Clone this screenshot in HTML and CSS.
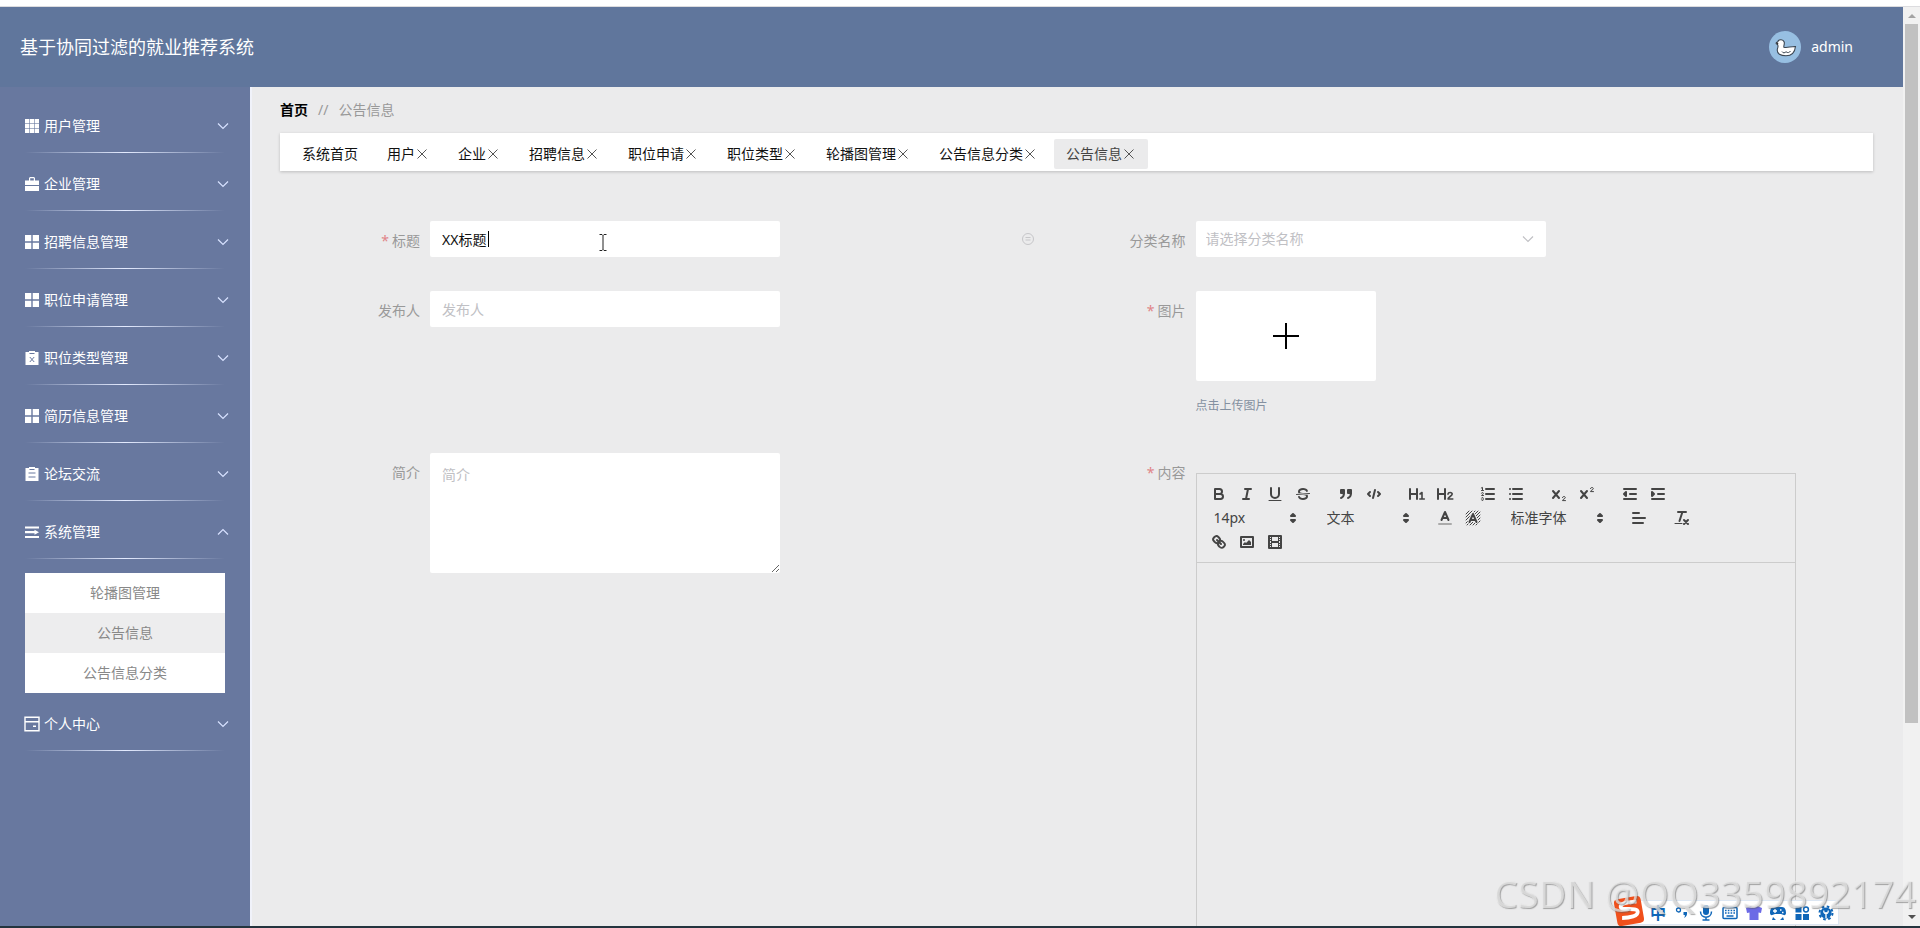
FILE: index.html
```html
<!DOCTYPE html>
<html lang="zh-CN">
<head>
<meta charset="utf-8">
<title>基于协同过滤的就业推荐系统</title>
<link rel="stylesheet" href="styles.css">
</head>
<body>
<svg class="defs" aria-hidden="true">
  <symbol id="down" viewBox="0 0 12 12"><path d="M1 3.500l5 5 5-5" fill="none" stroke="currentColor" stroke-width="1.200"/></symbol>
  <symbol id="up" viewBox="0 0 12 12"><path d="M1 8.500l5-5 5 5" fill="none" stroke="currentColor" stroke-width="1.200"/></symbol>
  <symbol id="close" viewBox="0 0 14 14"><path d="M2.500 2.500l9 9M11.500 2.500l-9 9" fill="none" stroke="currentColor"/></symbol>
  <symbol id="grid4" viewBox="0 0 14 14"><path d="M0 0h6.300v6.300H0zM7.700 0H14v6.300H7.700zM0 7.700h6.300V14H0zM7.700 7.700H14V14H7.700z" fill="currentColor"/></symbol>
  <symbol id="sorter" viewBox="0 0 18 18"><path d="M7 11l2 2 2-2zM7 7l2-2 2 2z" fill="#444" stroke="#444" stroke-width="2" stroke-linejoin="round"/></symbol>
</svg>

<div class="window-edge"></div>
<div class="viewport">
  <div class="app">
    <header class="header">
      <h1 class="brand">基于协同过滤的就业推荐系统</h1>
      <button class="user" type="button">
        <svg class="avatar" viewBox="0 0 32 32"><circle cx="16" cy="16" r="16" fill="#97bfe2"/><path d="M8.500 13.500c-2-.5-1.800-2 0-2.400C9.300 8.500 14 7.600 15.200 11c.6 2-.7 3.400-.3 5.200 3.200 1 6.800-.9 11.600-.7-.6 5.500-3.500 9.300-9.500 9.300-5.500 0-9.200-2-8.700-6.300.3-2 1.500-3 .2-5z" fill="#fff" stroke="#3b4652" stroke-width="1.100"/><path d="M13 20.500c1 2 3 1.500 4 .2 1.500 1.500 3.500 1 4.500-.7" fill="none" stroke="#3b4652"/><path d="M7 11.800l2.400.3-.6 2z" fill="#333"/></svg>
        <span>admin</span>
      </button>
    </header>

    <div class="body">
      <nav class="sidebar">
        <button class="menu" type="button"><svg class="ico" viewBox="0 0 14 14"><path d="M0 0h14v14H0z" fill="currentColor"/><path d="M4.500 0v14M9.500 0v14M0 4.500h14M0 9.500h14" stroke="#68789f" stroke-width=".6"/></svg><span>用户管理</span><svg class="arrow"><use href="#down"/></svg></button>
        <button class="menu" type="button"><svg class="ico" viewBox="0 0 14 14"><path d="M0 3.500h4V1l1-1h4l1 1v2.500h4V8H0zM5.200 3.500h3.600V1.300H5.200zM0 9h14v5H0z" fill="currentColor" fill-rule="evenodd"/></svg><span>企业管理</span><svg class="arrow"><use href="#down"/></svg></button>
        <button class="menu" type="button"><svg class="ico"><use href="#grid4"/></svg><span>招聘信息管理</span><svg class="arrow"><use href="#down"/></svg></button>
        <button class="menu" type="button"><svg class="ico"><use href="#grid4"/></svg><span>职位申请管理</span><svg class="arrow"><use href="#down"/></svg></button>
        <button class="menu" type="button"><svg class="ico" viewBox="0 0 14 14"><path d="M.5 1H4V0h6v1h3.500v13H.5z" fill="currentColor"/><path d="M4.500 2.500h5M4.800 6l4.400 5M9.200 6l-4.400 5" stroke="#68789f" fill="none"/></svg><span>职位类型管理</span><svg class="arrow"><use href="#down"/></svg></button>
        <button class="menu" type="button"><svg class="ico"><use href="#grid4"/></svg><span>简历信息管理</span><svg class="arrow"><use href="#down"/></svg></button>
        <button class="menu" type="button"><svg class="ico" viewBox="0 0 14 14"><path d="M.5 1H4V0h6v1h3.500v13H.5z" fill="currentColor"/><path d="M4.500 2.500h5M3.500 6h7M3.500 10h7" stroke="#68789f" fill="none"/></svg><span>论坛交流</span><svg class="arrow"><use href="#down"/></svg></button>
        <button class="menu" type="button" aria-expanded="true"><svg class="ico" viewBox="0 0 14 14"><path d="M0 2.500h14M0 7.200h10M0 12h14" stroke="currentColor" stroke-width="2.200"/><path d="M9.500 4.700l4.500 2.500-4.500 2.500z" fill="currentColor"/></svg><span>系统管理</span><svg class="arrow"><use href="#up"/></svg></button>
        <div class="submenu">
          <a href="#carousel">轮播图管理</a>
          <a class="current" href="#news">公告信息</a>
          <a href="#news-type">公告信息分类</a>
        </div>
        <button class="menu" type="button"><svg class="ico" viewBox="0 0 14 14"><path d="M0 .2h14v13.600H0zM0 4.800h14M8 9.300h3" fill="none" stroke="currentColor" stroke-width="1.400"/></svg><span>个人中心</span><svg class="arrow"><use href="#down"/></svg></button>
      </nav>

      <main class="content">
        <div class="crumbs"><a href="#home">首页</a><span>//</span><span>公告信息</span></div>
        <div class="tabs">
          <button class="tab" type="button">系统首页</button>
          <button class="tab" type="button">用户<svg><use href="#close"/></svg></button>
          <button class="tab" type="button">企业<svg><use href="#close"/></svg></button>
          <button class="tab" type="button">招聘信息<svg><use href="#close"/></svg></button>
          <button class="tab" type="button">职位申请<svg><use href="#close"/></svg></button>
          <button class="tab" type="button">职位类型<svg><use href="#close"/></svg></button>
          <button class="tab" type="button">轮播图管理<svg><use href="#close"/></svg></button>
          <button class="tab" type="button">公告信息分类<svg><use href="#close"/></svg></button>
          <button class="tab active" type="button">公告信息<svg><use href="#close"/></svg></button>
        </div>

        <form class="form">
          <div class="field">
            <label class="label required" for="title">标题</label>
            <div class="title-box">
              <input class="control" id="title" type="text" value="XX标题">
              <i class="caret"></i>
              <svg class="ibeam" viewBox="0 0 8 17"><path d="M.5.5h2.500l1 1 1-1h2.500M4 1.500v14M.5 16.500h2.500l1-1 1 1h2.500" fill="none" stroke="#222"/></svg>
            </div>
            <svg class="status" viewBox="0 0 14 14"><circle cx="7" cy="7" r="5.500" fill="none" stroke="currentColor"/><path d="M4.500 5.500h5M4.500 8h5" stroke="currentColor"/></svg>
          </div>
          <div class="field">
            <label class="label" for="category">分类名称</label>
            <div class="select-box">
              <select class="control" id="category"><option>请选择分类名称</option></select>
              <svg class="select-arrow"><use href="#down"/></svg>
            </div>
          </div>
          <div class="field">
            <label class="label" for="author">发布人</label>
            <input class="control" id="author" type="text" placeholder="发布人">
          </div>
          <div class="field">
            <label class="label required" for="upload">图片</label>
            <div>
              <button class="upload" id="upload" type="button" aria-label="上传图片"><svg viewBox="0 0 26 26"><path d="M13 0v26M0 13h26" stroke="#000" stroke-width="2"/></svg></button>
              <p class="tip">点击上传图片</p>
            </div>
          </div>
          <div class="field">
            <label class="label" for="summary">简介</label>
            <textarea class="control area" id="summary" placeholder="简介"></textarea>
          </div>
          <div class="field">
            <label class="label required" for="editor">内容</label>
            <div class="editor">
              <div class="toolbar">
                <span class="group">
                  <button type="button" aria-label="加粗"><svg viewBox="0 0 18 18"><path d="M5 4h4.500a2.500 2.500 0 0 1 0 5H5zM5 9h5.500a2.500 2.500 0 0 1 0 5H5z"/></svg></button>
                  <button type="button" aria-label="斜体"><svg viewBox="0 0 18 18"><path d="M7 4h6M5 14h6M8 14l2-10"/></svg></button>
                  <button type="button" aria-label="下划线"><svg viewBox="0 0 18 18"><path d="M5 3v6a4 4 0 0 0 8 0V3"/><path class="thin" d="M3 15.500h12"/></svg></button>
                  <button type="button" aria-label="删除线"><svg viewBox="0 0 18 18"><path class="thin" d="M15.500 8.500l-13 1"/><path class="fill" d="M9 8C6.500 7.800 6 7.500 6 6.500 6 5.800 7.300 5 9 5c1.600 0 2.800.7 3 1.300a1 1 0 0 0 1.900-.6C13.400 4.100 11.400 3 9 3 6.200 3 4 4.500 4 6.500a3.200 3.200 0 0 0 .5 1.800zM9 10c2.500.2 3 .5 3 1.500 0 .7-1.300 1.500-3 1.500-1.600 0-2.800-.7-3-1.300a1 1 0 1 0-1.900.6C4.600 13.900 6.600 15 9 15c2.800 0 5-1.500 5-3.500a3.200 3.200 0 0 0-.5-1.800z"/></svg></button>
                </span>
                <span class="group">
                  <button type="button" aria-label="引用"><svg viewBox="0 0 18 18"><path class="solid" d="M4 5h3v3H4zM11 5h3v3h-3z"/><path d="M7 8c0 4-3 5-3 5M14 8c0 4-3 5-3 5"/></svg></button>
                  <button type="button" aria-label="代码"><svg viewBox="0 0 18 18"><path d="M5 7L3 9l2 2M13 7l2 2-2 2M10 5L8 13"/></svg></button>
                </span>
                <span class="group">
                  <button type="button" aria-label="一级标题"><svg viewBox="0 0 18 18"><path d="M2 4v10M9 4v10M2 9h7"/><path class="mid" d="M12 9l2-1.500V14M11.800 14h4.500"/></svg></button>
                  <button type="button" aria-label="二级标题"><svg viewBox="0 0 18 18"><path d="M2 4v10M9 4v10M2 9h7"/><path class="mid" d="M12 9.300c0-2.600 4.200-2.300 4.200-.2C16.200 11 12 12 12 14h4.800"/></svg></button>
                </span>
                <span class="group">
                  <button type="button" aria-label="有序列表"><svg viewBox="0 0 18 18"><path d="M7 4h8M7 9h8M7 14h8"/><path class="thin" d="M2.300 3l1.200-.6v3.100M2.500 5.500h2M4.500 10.500h-2c0-.3 1.850-1.100 1.850-2.200a.96.96 0 0 0-1.850-.1M2.500 14.850a.96.96 0 0 0 1.850-.1.700.7 0 0 0-.6-.75.700.7 0 0 0 .6-.75.960.96 0 0 0-1.850-.1"/></svg></button>
                  <button type="button" aria-label="无序列表"><svg viewBox="0 0 18 18"><path d="M6 4h9M6 9h9M6 14h9M3 4h.01M3 9h.01M3 14h.01"/></svg></button>
                </span>
                <span class="group">
                  <button type="button" aria-label="下标"><svg viewBox="0 0 18 18"><path d="M3 6l6 7M9 6l-6 7"/><path class="thin" d="M12.500 12.600c0-1.700 2.800-1.500 2.800 0 0 1.300-2.800 1.600-2.800 3h3"/></svg></button>
                  <button type="button" aria-label="上标"><svg viewBox="0 0 18 18"><path d="M3 6l6 7M9 6l-6 7"/><path class="thin" d="M12.500 3.600c0-1.700 2.800-1.500 2.800 0 0 1.300-2.800 1.600-2.800 3h3"/></svg></button>
                </span>
                <span class="group">
                  <button type="button" aria-label="减少缩进"><svg viewBox="0 0 18 18"><path d="M3 14h12M3 4h12M9 9h6"/><path class="solid" d="M5 7v4L3 9z"/></svg></button>
                  <button type="button" aria-label="增加缩进"><svg viewBox="0 0 18 18"><path d="M3 14h12M3 4h12M9 9h6"/><path class="solid" d="M3 7v4l2-2z"/></svg></button>
                </span>
                <span class="group picker"><select aria-label="字号"><option>14px</option></select><svg><use href="#sorter"/></svg></span>
                <span class="group picker"><select aria-label="标题级别"><option>文本</option></select><svg><use href="#sorter"/></svg></span>
                <span class="group">
                  <button type="button" aria-label="文字颜色"><svg viewBox="0 0 18 18"><path d="M5.500 11L9 3l3.500 8M6.400 9h5.200"/><path class="label-line" d="M3 15h12"/></svg></button>
                  <button type="button" aria-label="背景颜色"><svg viewBox="0 0 18 18"><path class="hatch" d="M2 5l3-3M2 8l6-6M2 11l9-9M2 14L14 2M3 16L16 3M6 16L16 6M9 16l7-7M12 16l4-4"/><path class="halo" d="M5.500 13L9 5l3.500 8M6.400 11h5.200"/><path d="M5.500 13L9 5l3.500 8M6.400 11h5.200"/></svg></button>
                </span>
                <span class="group picker wide"><select aria-label="字体"><option>标准字体</option></select><svg><use href="#sorter"/></svg></span>
                <span class="group"><button type="button" aria-label="对齐"><svg viewBox="0 0 18 18"><path d="M3 4h6M3 9h12M3 14h10"/></svg></button></span>
                <span class="group"><button type="button" aria-label="清除格式"><svg viewBox="0 0 18 18"><path d="M5 3h8M6.500 12L9.400 3M11 11l4 4M15 11l-4 4"/><path class="thin" d="M2 14.500h7"/></svg></button></span>
                <span class="group">
                  <button type="button" aria-label="链接"><svg viewBox="0 0 18 18"><path d="M7 7l4 4M8.900 4.600a3.500 3.500 0 0 1 .4 4.700 3.500 3.500 0 0 1-4.700-.4C3.200 7.500 2 6.400 4.200 4.200s3.300-1 4.700.4zM13.400 9.100a3.500 3.500 0 0 0-4.700-.4 3.500 3.500 0 0 0 .4 4.700c1.400 1.400 2.500 2.500 4.700.4s1-3.300-.4-4.700z"/></svg></button>
                  <button type="button" aria-label="图片"><svg viewBox="0 0 18 18"><path d="M3 4h12v10H3z"/><circle class="fill" cx="6" cy="7" r="1"/><path class="fill" d="M5 12v-1l2-2 1 1 3-3 2 2v3z"/></svg></button>
                  <button type="button" aria-label="视频"><svg viewBox="0 0 18 18"><path d="M3 3h12v12H3z"/><path class="fill" d="M5 3h1v12H5zM12 3h1v12h-1zM5 8h8v2H5zM3 5h3v1H3zM3 7h3v1H3zM3 10h3v1H3zM3 12h3v1H3zM12 5h3v1h-3zM12 7h3v1h-3zM12 10h3v1h-3zM12 12h3v1h-3z"/></svg></button>
                </span>
              </div>
              <textarea class="editor-text" id="editor"></textarea>
            </div>
          </div>
        </form>
      </main>
    </div>
  </div>

  <div class="scrollbar">
    <svg viewBox="0 0 8 4"><path d="M0 4l4-4 4 4z" fill="#a3a3a3"/></svg>
    <div class="rail"><div class="thumb"></div></div>
    <svg viewBox="0 0 8 4"><path d="M0 0l4 4 4-4z" fill="#505050"/></svg>
  </div>
</div>
<div class="taskbar-edge"></div>

<div class="ime">
  <svg class="ime-logo" viewBox="0 0 32 32"><g transform="rotate(-10 16 16)"><rect x="2.500" y="2.500" width="27" height="27" rx="4" fill="#f0501c"/><path d="M25 8c-7-1.200-16.500-1-16.500 2.500 0 4.500 16 2.500 16 7.500 0 4.500-9 5-16.500 3.700" fill="none" stroke="#fff" stroke-width="3.800"/></g></svg>
  <span>中</span>
  <svg viewBox="0 0 16 16"><circle cx="4.500" cy="5" r="2" fill="none" stroke="#0f66b8" stroke-width="1.300"/><path d="M9.500 7h3.500c.5 3-.8 5-3 6 1-1.500 1-2 .8-3H9.500z" fill="#0f66b8"/></svg>
  <svg viewBox="0 0 16 16"><rect x="5" y="0" width="6" height="10" rx="3" fill="#0f66b8"/><path d="M2.500 6.500c0 7.500 11 7.500 11 0M8 12v3M4.500 15h7" fill="none" stroke="#0f66b8" stroke-width="1.500"/></svg>
  <svg viewBox="0 0 16 16"><rect x="1" y="2.500" width="14" height="11" rx="1" fill="none" stroke="#0f66b8" stroke-width="1.500"/><path d="M3 5.500h10M3 8h10" stroke="#0f66b8" stroke-width="1.500" stroke-dasharray="1.600 1.200"/><path d="M4.500 11h7" stroke="#0f66b8" stroke-width="1.500"/></svg>
  <svg viewBox="0 0 16 16"><path d="M0 3l5-2c1.500 2 4.500 2 6 0l5 2-1 5-2.500-.5V15h-9V7.500L1 8z" fill="#6c6ae6"/></svg>
  <svg viewBox="0 0 16 16"><path d="M4 2h8c3 0 4 3 4 6 0 1.500-1 2.500-2.300 2L11 9H5l-2.700 1C1 10.500 0 9.500 0 8c0-3 1-6 4-6zM3 12l3 3H2zM13 12l-3 3h4z" fill="#0f66b8"/><path d="M3 6h4M5 4v4M10 5h1.500M12 7.500h1.500" stroke="#fff" stroke-width="1.300"/></svg>
  <svg viewBox="0 0 16 16"><path d="M1.500 1.500h6v6h-6zM1.500 9h6v6h-6zM9 9h6v6H9z" fill="#0f66b8"/><circle cx="12" cy="4.500" r="2.400" fill="none" stroke="#0f66b8" stroke-width="1.500"/></svg>
  <svg viewBox="0 0 16 16"><circle cx="8" cy="8" r="5.600" fill="#0f66b8"/><circle cx="8" cy="8" r="6.500" fill="none" stroke="#0f66b8" stroke-width="2" stroke-dasharray="2.600 2.500"/><path d="M8 7v6M6 5.500a2.200 2.200 0 1 0 4 0" fill="none" stroke="#fff" stroke-width="1.300"/></svg>
</div>
<div class="watermark">CSDN @QQ3359892174</div>
</body>
</html>
```
FILE: styles.css
```css
* { box-sizing: border-box; }

body {
  margin: 0;
  height: 100vh;
  display: flex;
  flex-direction: column;
  overflow: hidden;
  background: #ebebec;
  font: 14px/20px "Noto Sans", "Noto Sans CJK SC", sans-serif;
}

button, input, select, textarea { font: inherit; color: inherit; }
button { border: 0; padding: 0; background: none; cursor: pointer; }
a { color: inherit; text-decoration: none; }
.defs { display: none; }

.window-edge { flex: none; height: 7px; background: #fff; border-bottom: 1px solid #dcdcdf; }
.taskbar-edge { flex: none; height: 2px; background: #24343e; }
.viewport { flex: 1; min-height: 0; display: flex; }
.app { flex: 1; min-width: 0; display: flex; flex-direction: column; }

.header {
  flex: none;
  height: 80px;
  padding: 0 50px 0 20px;
  display: flex;
  align-items: center;
  justify-content: space-between;
  background: #60769c;
  color: #fff;
}
.brand { margin: 0; font-size: 18px; font-weight: 400; }
.user { display: flex; align-items: center; gap: 10px; font-size: 14px; }
.avatar { width: 32px; height: 32px; }

.body { flex: 1; min-height: 0; display: flex; }
.sidebar {
  flex: none;
  width: 250px;
  padding: 8px 21px 0 25px;
  background: #68789f;
  color: #fff;
}
.menu {
  width: 100%;
  height: 58px;
  padding-top: 3px;
  display: flex;
  align-items: center;
  gap: 5px;
  background: linear-gradient(90deg, transparent, #e4ebff 50%, transparent) left bottom / 200px 1px no-repeat;
}
.ico { width: 14px; height: 14px; overflow: visible; }
.arrow { width: 12px; height: 12px; margin-left: auto; color: #d8e2ff; }
.submenu { margin: 14px 4px 0 0; background: #fff; color: #888; text-align: center; }
.submenu a { display: block; line-height: 40px; }
.submenu .current { background: #ededee; }

.content { flex: 1; min-width: 0; padding: 0 30px 0 28px; border-left: 2px solid #f0f2fa; overflow: hidden; }
.crumbs { height: 46px; display: flex; align-items: center; gap: 10px; color: #999; }
.crumbs a { color: #000; font-weight: 700; }

.tabs {
  height: 38px;
  padding: 4px 10px 0;
  display: flex;
  align-items: center;
  gap: 5px;
  background: #fff;
  box-shadow: 0 1px 3px rgba(0, 0, 0, .2);
}
.tab { height: 30px; padding: 0 12px; display: flex; align-items: center; color: #111; }
.tab svg { width: 14px; height: 14px; color: #555; }
.tab.active { background: #ebebec; color: #444; border-radius: 2px; }

.form { padding: 50px 32px 0 30px; display: grid; grid-template-columns: 1fr 1fr; row-gap: 30px; }
.field { display: flex; align-items: flex-start; }
.label { flex: none; width: 120px; padding-right: 10px; line-height: 40px; text-align: right; color: #999; }
.required::before { content: "*"; margin-right: 3px; color: #e08488; }
.control {
  display: block;
  width: 350px;
  height: 36px;
  padding: 0 12px;
  border: 0;
  border-radius: 2px;
  background: #fff;
  color: #111;
  outline: 0;
}
.control::placeholder { color: #c0c0c4; }
.area { height: 120px; padding-top: 12px; resize: both; }
.title-box, .select-box { position: relative; }
.caret { position: absolute; left: 58px; top: 10px; width: 1px; height: 16px; background: #000; }
.ibeam { position: absolute; left: 169px; top: 13px; width: 8px; height: 17px; }
.status { width: 14px; height: 14px; margin: 11px 41px 0 auto; color: #c6c6c9; }
select.control { appearance: none; padding: 0 10px; color: #c0c0c4; }
.select-arrow { position: absolute; right: 12px; top: 12px; width: 12px; height: 12px; color: #c0c0c4; pointer-events: none; }

.upload { width: 180px; height: 90px; display: grid; place-items: center; background: #fff; border-radius: 2px; }
.upload svg { width: 26px; height: 26px; }
.tip { margin: 12px 0 4px; font-size: 12px; line-height: 26px; color: #8490a0; }

.editor { width: 600px; margin-top: 20px; border: 1px solid #ccc; }
.toolbar { padding: 8px; display: flex; flex-wrap: wrap; border-bottom: 1px solid #ccc; }
.group { display: flex; margin-right: 15px; }
.group button { width: 28px; height: 24px; padding: 3px 5px; }
.group svg { display: block; width: 18px; height: 18px; fill: none; stroke: #444; stroke-width: 2; stroke-linecap: round; stroke-linejoin: round; }
.group .thin { stroke-width: 1; }
.group .hatch { stroke-width: 1; }
.group .mid { stroke-width: 1.6; }
.group .fill { fill: #444; stroke: none; }
.group .solid { fill: #444; }
.group .label-line { stroke: #aaa; }
.group .halo { stroke: #ebebec; stroke-width: 4; }
.picker { position: relative; width: 98px; height: 24px; color: #444; }
.picker.wide { width: 108px; }
.picker select { appearance: none; width: 100%; padding: 0 9px; border: 0; background: none; }
.picker svg { position: absolute; right: 1px; top: 3px; pointer-events: none; }
.editor-text { display: block; width: 100%; height: 600px; padding: 12px 15px; border: 0; background: none; resize: none; outline: 0; }

.scrollbar {
  flex: none;
  width: 17px;
  padding: 7px 0;
  display: flex;
  flex-direction: column;
  align-items: center;
  gap: 6px;
  background: #f1f1f1;
}
.scrollbar svg { flex: none; width: 8px; height: 4px; }
.rail { flex: 1; width: 13px; }
.thumb { height: 79%; min-height: 40px; background: #c1c1c1; }

.ime {
  position: fixed;
  right: 81px;
  bottom: 3px;
  height: 25px;
  padding: 0 4px 0 27px;
  display: flex;
  align-items: center;
  gap: 8px;
  background: #fff;
  border: 1px solid #dce6f2;
  color: #0f66b8;
  font-size: 16px;
  font-weight: 700;
}
.ime svg { width: 16px; height: 16px; }
.ime .ime-logo { position: absolute; left: -10px; bottom: -3px; width: 32px; height: 32px; }
.watermark {
  position: fixed;
  right: 4px;
  bottom: 11px;
  font: 38px/48px "Noto Sans", sans-serif;
  color: rgba(236, 236, 236, .7);
  text-shadow: 1px 1px 1px rgba(90, 90, 90, .5);
  pointer-events: none;
}
```
